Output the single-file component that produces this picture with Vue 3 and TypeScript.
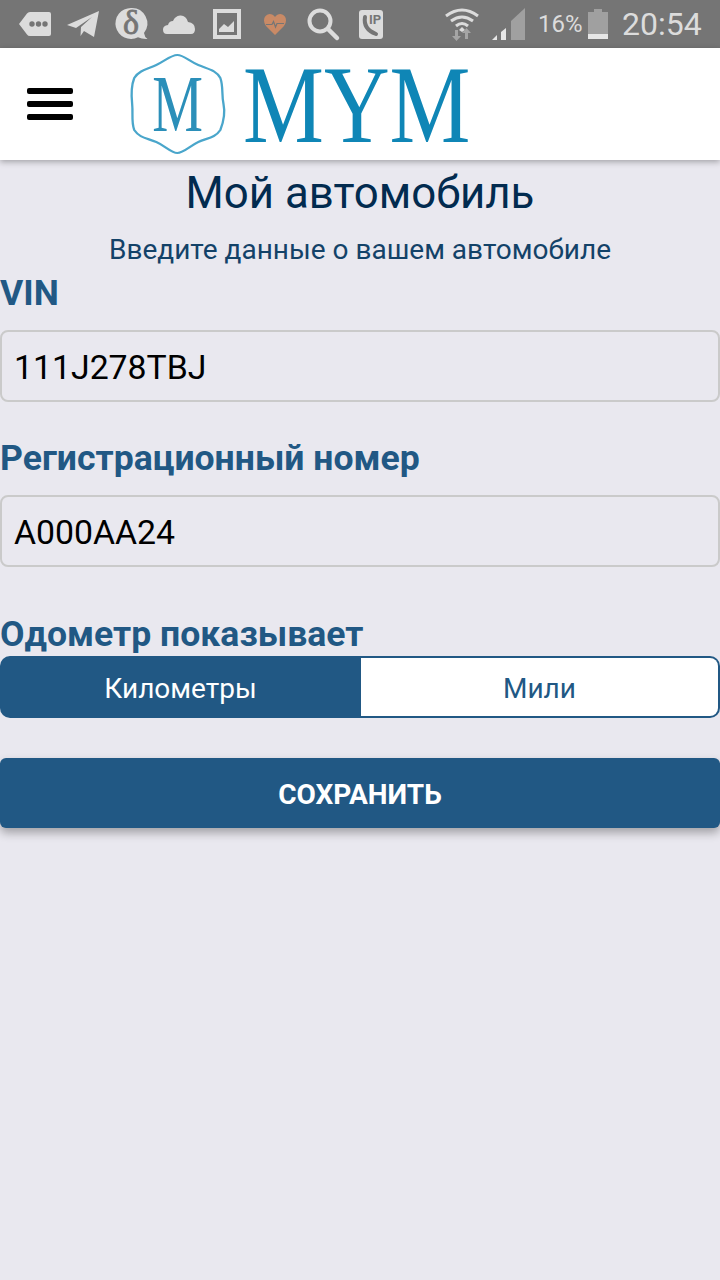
<script setup lang="ts">
const unit = ['Километры', 'Мили'];
</script>

<template>
  <div class="page">
    <div class="status">
      <svg class="ic" style="width:32px" viewBox="0 0 32 24"><path d="M0 12 8 1.500Q9 0 11 0H30Q32 0 32 2V22Q32 24 30 24H11Q9 24 8 22.500Z" fill="#dcdcdc"/><circle cx="13" cy="12" r="2.700" fill="#757575"/><circle cx="19.500" cy="12" r="2.700" fill="#757575"/><circle cx="26" cy="12" r="2.700" fill="#757575"/></svg>
      <svg class="ic m1" style="width:32px" viewBox="0 0 32 27"><path d="M0 14 32 0 27 26 17 20 13.500 25 14 16 25 6 9 17Z" fill="#dcdcdc"/></svg>
      <svg class="ic m2" style="width:33px" viewBox="0 0 33 32"><path d="M16 0a15.500 15.500 0 1 0 7 29.300q4 2 9.500 1.700q-3-2-3.500-6A15.500 15.500 0 0 0 16 0Z" fill="#dcdcdc"/><text x="16" y="25.500" text-anchor="middle" class="delta">δ</text></svg>
      <svg class="ic m3" style="width:32px" viewBox="0 0 32 19"><path d="M4 19Q0 19 0 14.500Q0 10.500 5 10Q6 6 10 6Q12 1 17 .500Q23 0 25 7Q32 8 32 14Q32 19 28 19Z" fill="#dcdcdc"/></svg>
      <svg class="ic m4" style="width:28px" viewBox="0 0 28 30"><path d="M0 0H28V30H0ZM4 4V26H24V4Z" fill="#dcdcdc" fill-rule="evenodd"/><path d="M6 23V20L11 15 15 18 21 12V23Z" fill="#dcdcdc"/></svg>
      <svg class="ic m5" style="width:22px" viewBox="0 0 22 21"><path d="M11 21 2 12Q0 9.500 0 6.500Q0 1 5.500 0Q9 0 11 3Q13 0 16.500 0Q22 1 22 6.500Q22 9.500 20 12Z" fill="#c98a66"/><path d="M2 10.500H8L9.500 7.500 11.500 13 13 9.500H20" fill="none" stroke="#757575" stroke-width="1.200"/></svg>
      <svg class="ic m6" style="width:32px" viewBox="0 0 32 32"><circle cx="13" cy="13" r="10.500" fill="none" stroke="#dcdcdc" stroke-width="4"/><path d="M21 21 30 30" stroke="#dcdcdc" stroke-width="4.500" stroke-linecap="round"/></svg>
      <svg class="ic m7" style="width:24px" viewBox="0 0 24 29"><rect width="24" height="29" rx="3" fill="#dcdcdc"/><path d="M6 7Q4 19 17 24" fill="none" stroke="#757575" stroke-width="4" stroke-linecap="round"/><text x="16" y="14" text-anchor="middle" class="ip">IP</text></svg>
      <svg class="ic m8" style="width:34px" viewBox="0 0 34 33"><path d="M1 8Q17-4 33 8" fill="none" stroke="#dcdcdc" stroke-width="3"/><path d="M6 13Q17 5 28 13" fill="none" stroke="#dcdcdc" stroke-width="3"/><path d="M11 18Q17 13 23 18" fill="none" stroke="#dcdcdc" stroke-width="3"/><path d="M14 22 17 19 20 22 17 24Z" fill="#dcdcdc"/><path d="M7 28H10V22H13V28H16L11.500 33ZM17 25 21.500 20 26 25H23V31H20V25Z" fill="#a5a5a5"/></svg>
      <svg class="ic m9" style="width:34px" viewBox="0 0 34 32"><path d="M0 32 5 27V32Z" fill="#e6e6e6"/><path d="M9 24 14 20V32H9Z" fill="#e6e6e6"/><path d="M19 13 33 0V32H19Z" fill="#a0a0a0"/></svg>
      <span class="pct">16%</span>
      <svg class="ic m10" style="width:20px" viewBox="0 0 20 30"><path d="M6 0H14V3H20V30H0V3H6Z" fill="#a0a0a0"/><rect y="25" width="20" height="5" fill="#e6e6e6"/></svg>
      <span class="time">20:54</span>
    </div>

    <header class="top">
      <button class="burger" type="button"><i></i><i></i><i></i></button>
      <div class="logo">
        <svg class="emblem" viewBox="0 0 94 100">
          <path transform="translate(-1 0) scale(1.050 1)" d="M46 1C52 1 57 7 66 11S83 16 87 24C90 33 88 40 90 50S90 68 87 76C82 84 74 84 66 88S52 99 46 99C40 99 35 92 26 88S10 84 5 76C2 68 4 60 3 50S2 32 5 24C10 16 18 15 26 11S40 1 46 1Z" fill="none" stroke="#4aa6cb" stroke-width="2.200"/>
          <text class="emblem-m" text-anchor="middle" transform="translate(47.500 77) scale(1 1.400)">M</text>
        </svg>
        <svg class="word" viewBox="0 0 226 76"><text class="word-t" transform="translate(-1 75.500) scale(1 1.200)">MYM</text></svg>
      </div>
    </header>

    <main class="form">
      <h1 class="title">Мой автомобиль</h1>
      <p class="sub">Введите данные о вашем автомобиле</p>

      <label class="lbl l1">VIN</label>
      <div class="inp">111J278TBJ</div>

      <label class="lbl l2">Регистрационный номер</label>
      <div class="inp">A000AA24</div>

      <label class="lbl l3">Одометр показывает</label>
      <div class="seg">
        <div class="opt on">{{ unit[0] }}</div>
        <div class="opt off">{{ unit[1] }}</div>
      </div>

      <button class="save" type="button">СОХРАНИТЬ</button>
    </main>
  </div>
</template>

<style>
html, body { margin: 0; background: #e9e8ef; }
</style>

<style scoped>
.page { width: 720px; height: 1280px; background: #e9e8ef; font-family: Roboto, sans-serif; overflow: hidden; }
.status { height: 48px; background: #757575; display: flex; align-items: center; padding-left: 19px; box-sizing: border-box; }
.ic { display: block; flex: none; overflow: visible; }
.m1 { margin-left: 16px; }
.m2 { margin-left: 16px; }
.m3 { margin-left: 15px; }
.m4 { margin-left: 18px; }
.m5 { margin-left: 23px; }
.m6 { margin-left: 21px; }
.m7 { margin-left: 20px; }
.m8 { margin-left: 62px; }
.m9 { margin-left: 13px; }
.m10 { margin-left: 7px; }
.delta { font: 400 34px "Liberation Serif", serif; fill: #757575; stroke: #757575; stroke-width: .8px; }
.ip { font: 700 13px Roboto, sans-serif; fill: #757575; }
.pct { margin-left: 12px; font-size: 24px; color: #dcdcdc; width: 43px; white-space: nowrap; }
.time { margin-left: 14px; font-size: 32px; color: #dcdcdc; white-space: nowrap; }

.top { height: 112px; background: #fff; display: flex; align-items: center; padding-left: 27px; box-sizing: border-box; box-shadow: 0 2px 6px rgba(0, 0, 0, .3); position: relative; }
.burger { width: 46px; height: 32px; padding: 0; border: 0; background: none; display: flex; flex-direction: column; justify-content: space-between; flex: none; margin-bottom: 1px; }
.burger i { display: block; height: 6px; border-radius: 2px; background: #000; }
.logo { display: flex; align-items: center; margin-left: 57px; }
.emblem { width: 94px; height: 100px; display: block; overflow: visible; }
.emblem-m { font: 400 57px "Liberation Serif", serif; fill: #2b8fb9; }
.word { width: 226px; height: 76px; display: block; margin-left: 20px; overflow: visible; }
.word-t { font: 400 91px "Liberation Serif", serif; fill: #0f86b6; }

.form { display: flex; flex-direction: column; }
.title { margin: 8px 0 0; font-size: 43.800px; line-height: 50px; font-weight: 400; color: #022b4f; text-align: center; }
.sub { margin: 17px 0 0; font-size: 28px; line-height: 30px; color: #134268; text-align: center; }
.lbl { font-size: 35.600px; line-height: 40px; font-weight: 700; color: #215884; }
.l1 { margin-top: 8px; }
.l2 { margin-top: 36px; }
.l3 { margin-top: 47px; }
.inp { height: 72px; margin-top: 17px; box-sizing: border-box; border: 2px solid #cacaca; border-radius: 8px; padding: 2px 0 0 12px; display: flex; align-items: center; font-size: 33.800px; color: #000; }
.seg { height: 62px; margin-top: 2px; display: flex; }
.opt { box-sizing: border-box; display: flex; align-items: center; justify-content: center; font-size: 28px; padding-top: 2px; }
.opt.on { flex: 0 0 361px; color: #fff; background: #215884; border-radius: 10px 0 0 10px; }
.opt.off { flex: 1 1 0; color: #215884; background: #fff; border: 2px solid #215884; border-left: 0; border-radius: 0 10px 10px 0; }
.save { height: 70px; margin-top: 40px; border: 0; padding: 2px 0 0; border-radius: 6px; background: #215884; color: #fff; font: 700 28px Roboto, sans-serif; box-shadow: 0 5px 10px rgba(0, 0, 0, .3); }
</style>
